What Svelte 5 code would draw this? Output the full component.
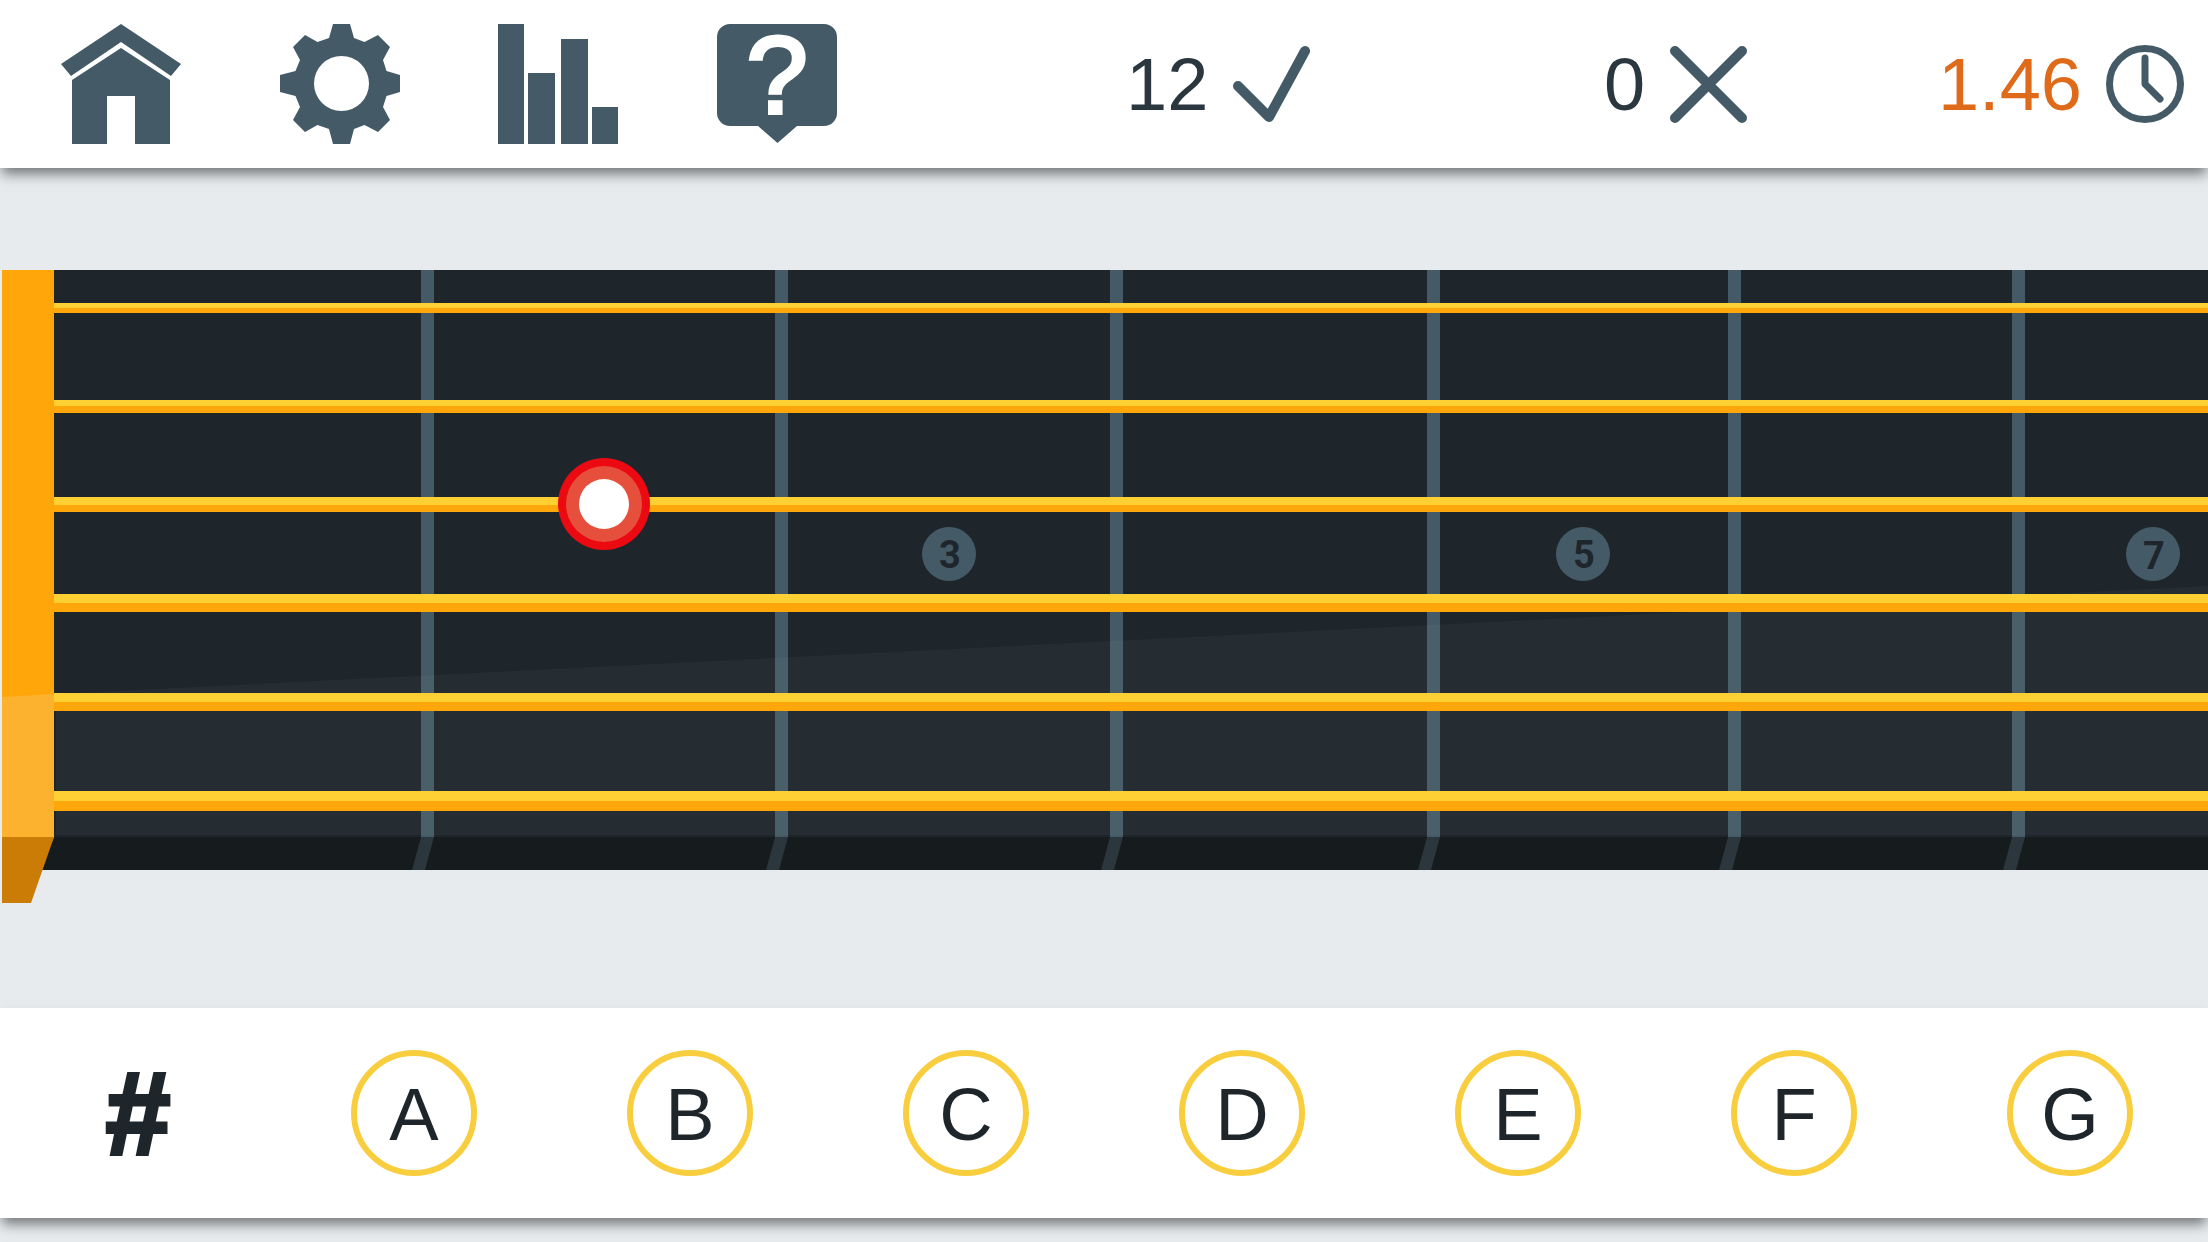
<script lang="ts">
interface GuitarString {
  y: number
  light: number
  dark: number
}

const notes = ['A', 'B', 'C', 'D', 'E', 'F', 'G']

const frets = [421, 775, 1110, 1427, 1728, 2012]

// y is the top edge, light and dark are the heights of the two halves
const strings: GuitarString[] = [
  { y: 33, light: 5, dark: 5 },
  { y: 130, light: 6, dark: 7 },
  { y: 227, light: 8, dark: 7 },
  { y: 324, light: 9, dark: 9 },
  { y: 423, light: 9, dark: 9 },
  { y: 521, light: 10, dark: 10 },
]

const inlays = [
  { fret: 3, x: 949, baseline: 298 },
  { fret: 5, x: 1583, baseline: 298 },
  { fret: 7, x: 2153, baseline: 299 },
]

const correct = 12
const wrong = 0
const seconds = 1.46

let target = $state({ x: 604, y: 234 })
let sharp = $state(false)
let picked = $state('')
</script>

<div class="app">
  <header class="bar topbar">
    <nav class="menu">
      <button type="button" aria-label="Home">
        <svg viewBox="0 0 120 120">
          <path d="M60 0L120 40L110 52L60 18L10 52L0 40Z" />
          <path d="M60 24L109 56V120H74V72H46V120H11V56Z" />
        </svg>
      </button>
      <button type="button" aria-label="Settings">
        <svg viewBox="0 0 120 120">
          <path
            fill-rule="evenodd"
            d="M53 0H70L74 14L84.500 18L98 11L110 23L103 36L106.500 47L120 51V68L106.500 72L103 83L110 96L98 108L84.500 101L74 105L70 120H53L49 105L37.500 101L25 108L13 96L20 83L15.500 72L0 68V51L15.500 47L20 36L13 23L25 11L37.500 18L49 14ZM61.500 32A27.500 27.500 0 1 0 61.500 87A27.500 27.500 0 1 0 61.500 32Z"
          />
        </svg>
      </button>
      <button type="button" aria-label="Statistics">
        <svg viewBox="0 0 120 120">
          <rect x="0" y="0" width="26" height="120" />
          <rect x="30" y="49" width="27" height="71" />
          <rect x="63" y="15" width="27" height="105" />
          <rect x="94" y="83" width="26" height="37" />
        </svg>
      </button>
      <button type="button" aria-label="Help">
        <svg viewBox="0 0 120 120">
          <path d="M13 0H107A13 13 0 0 1 120 13V89A13 13 0 0 1 107 102H80L60.500 119L41 102H13A13 13 0 0 1 0 89V13A13 13 0 0 1 13 0Z" />
          <text class="question" x="60" y="89" text-anchor="middle">?</text>
        </svg>
      </button>
    </nav>

    <div class="stat">
      <span>{correct}</span>
      <svg viewBox="0 0 78 78" role="img" aria-label="correct">
        <path class="line" d="M6 41L37 72L73 6" />
      </svg>
    </div>
    <div class="stat">
      <span>{wrong}</span>
      <svg viewBox="0 0 78 78" role="img" aria-label="wrong">
        <path class="line" d="M6 6L73 73M73 6L6 73" />
      </svg>
    </div>
    <div class="stat time">
      <span>{seconds}</span>
      <svg viewBox="0 0 78 78" role="img" aria-label="seconds per note">
        <circle class="line thin" cx="39" cy="39" r="35.500" />
        <path class="line thin" d="M39 13V39L54 54" />
      </svg>
    </div>
  </header>

  <main>
    <svg class="board" viewBox="0 0 2208 634" role="img" aria-label="Fretboard">
      <rect class="wood" x="54" y="0" width="2154" height="567" />
      <path class="side" d="M54 567H2208V600H40Z" />

      {#each frets as x}
        <rect class="fret" {x} y="0" width="13" height="567" />
        <path class="fret-side" d="M{x} 567h13l-9 33h-13Z" />
      {/each}

      {#each inlays as inlay}
        <circle class="inlay" cx={inlay.x} cy="284" r="27" />
        <text class="inlay-text" x={inlay.x + 1} y={inlay.baseline} text-anchor="middle">{inlay.fret}</text>
      {/each}

      <path class="nut" d="M2 0H54V567H2Z" />
      <path class="shine" d="M56 424L2208 316V565H56Z" />
      <path class="nut-shine" d="M2 427L54 424V567H2Z" />
      <path class="nut-side" d="M2 567H54L31 633H2Z" />

      {#each strings as s}
        <rect class="string-light" x="54" y={s.y} width="2154" height={s.light} />
        <rect class="string-dark" x="54" y={s.y + s.light} width="2154" height={s.dark} />
      {/each}

      <circle class="ring" cx={target.x} cy={target.y} r="46" />
      <circle class="ring-inner" cx={target.x} cy={target.y} r="38" />
      <circle class="dot" cx={target.x} cy={target.y} r="25" />
    </svg>
  </main>

  <footer class="bar notes">
    <button class="sharp" type="button" aria-pressed={sharp} onclick={() => (sharp = !sharp)}>#</button>
    {#each notes as note}
      <button class="note" type="button" aria-pressed={picked === note} onclick={() => (picked = note)}>{note}</button>
    {/each}
  </footer>
</div>

<style>
  :global(body) {
    margin: 0;
    background: #e7ebee;
  }

  .app {
    display: flex;
    flex-direction: column;
    min-height: 100vh;
    box-sizing: border-box;
    padding-bottom: 24px;
    background: #e7ebee;
    font-family: 'Liberation Sans', Arial, sans-serif;
  }

  .bar {
    background: #fff;
    box-shadow: 0 8px 12px -2px rgba(0, 0, 0, 0.5);
  }

  button {
    padding: 0;
    border: none;
    background: none;
    font-family: inherit;
    color: #1e262b;
    cursor: pointer;
  }

  .topbar {
    display: grid;
    grid-template-columns: 2fr 1fr 1fr 1fr;
    align-items: center;
    padding: 24px 24px 24px 0;
  }

  .menu {
    display: grid;
    grid-template-columns: repeat(4, 1fr);
    justify-items: end;
  }

  .menu button {
    width: 120px;
    height: 120px;
    margin-right: 37px;
  }

  .menu svg {
    display: block;
    width: 120px;
    height: 120px;
    overflow: visible;
    fill: #445b67;
  }

  .menu .question {
    font-size: 110px;
    fill: #fff;
    stroke: #fff;
    stroke-width: 4px;
  }

  .stat {
    display: flex;
    align-items: center;
    justify-content: flex-end;
    gap: 24px;
    font-size: 74px;
    color: #2b373e;
  }

  .stat span {
    padding-top: 2px;
    line-height: 88px;
  }

  .stat svg {
    width: 78px;
    height: 78px;
  }

  .stat.time {
    color: #df6b1a;
  }

  .line {
    fill: none;
    stroke: #445b67;
    stroke-width: 10px;
    stroke-linecap: round;
    stroke-linejoin: round;
  }

  .thin {
    stroke-width: 7px;
  }

  main {
    flex: 1;
    display: flex;
    align-items: center;
    padding-bottom: 2px;
  }

  .board {
    display: block;
    width: 100%;
  }

  .wood {
    fill: #1e262c;
  }

  .side {
    fill: #161b1d;
  }

  .fret {
    fill: #445b67;
  }

  .fret-side {
    fill: #2b363d;
  }

  .inlay {
    fill: #445b67;
  }

  .inlay-text {
    font-family: Roboto, sans-serif;
    font-size: 38px;
    font-weight: 700;
    fill: #1e262c;
  }

  .nut,
  .string-dark {
    fill: #ffa60a;
  }

  .nut-side {
    fill: #cb7c06;
  }

  .nut-shine {
    fill: #fcb22f;
  }

  .shine {
    fill: #fff;
    opacity: 0.03;
  }

  .string-light {
    fill: #ffd033;
  }

  .ring {
    fill: #ec0a12;
  }

  .ring-inner {
    fill: #e64f3b;
  }

  .dot {
    fill: #fff;
  }

  .notes {
    display: grid;
    grid-template-columns: repeat(8, 1fr);
    place-items: center;
    padding: 42px 0;
  }

  .note {
    width: 126px;
    height: 126px;
    padding-top: 4px;
    border: 6px solid #f9ce3e;
    border-radius: 50%;
    font-size: 74px;
    line-height: 110px;
  }

  .sharp {
    height: 126px;
    padding-top: 2px;
    font-size: 116px;
    font-weight: 700;
    line-height: 124px;
    -webkit-text-stroke: 4px #1e262b;
  }
</style>
